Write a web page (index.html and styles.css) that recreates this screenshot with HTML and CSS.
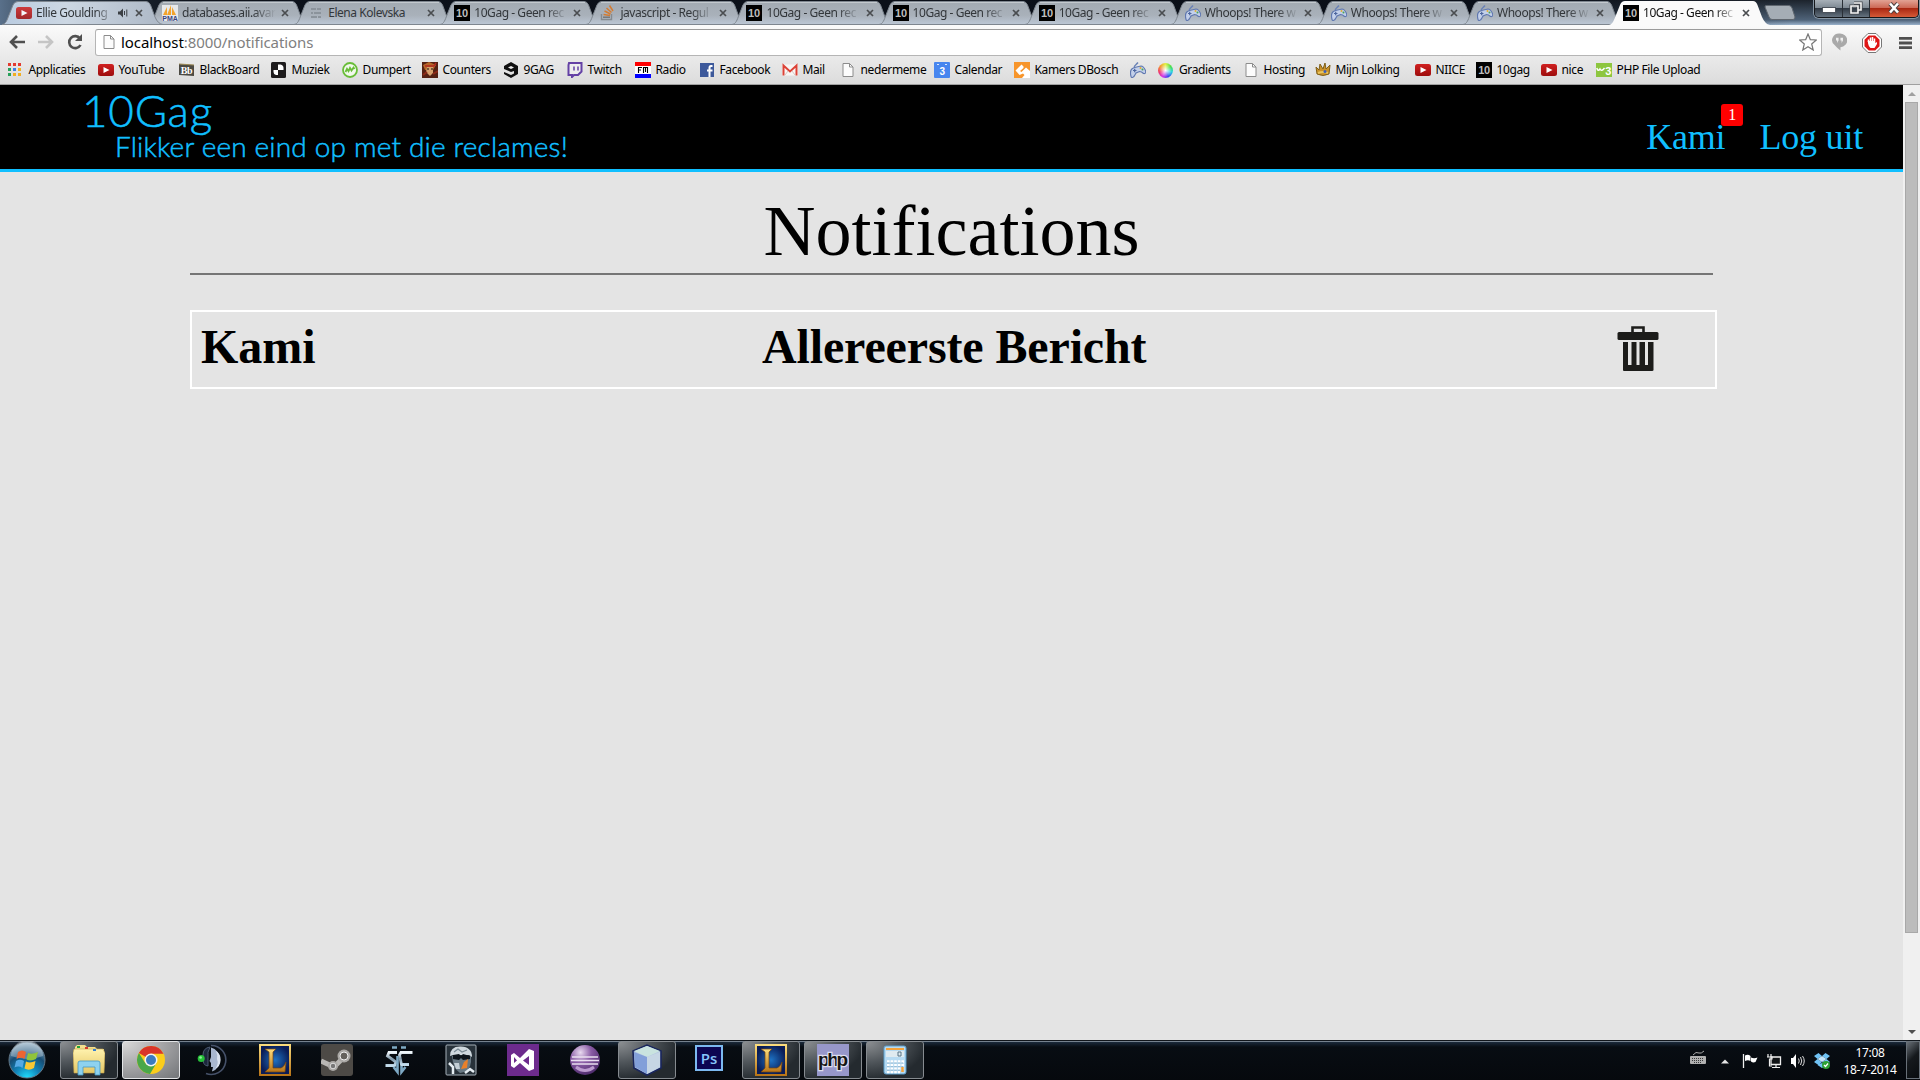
FILE: index.html
```
<!DOCTYPE html>
<html lang="nl">
<head>
<meta charset="utf-8">
<title>10Gag - Geen reclames</title>
<link rel="stylesheet" href="styles.css">
</head>
<body>
<svg class="defs" width="0" height="0">
  <defs>
    <linearGradient id="tabFill" x1="0" y1="0" x2="0" y2="1"><stop offset="0" stop-color="#a2aab2"/><stop offset=".6" stop-color="#a9b1ba"/><stop offset="1" stop-color="#bcc7d5"/></linearGradient>
    <linearGradient id="tabFirst" x1="0" y1="0" x2="1" y2="0"><stop offset="0" stop-color="#b9cbe0"/><stop offset=".4" stop-color="#ccd7e3"/><stop offset="1" stop-color="#adb8c6"/></linearGradient>
    <linearGradient id="red" x1="0" y1="0" x2="0" y2="1"><stop offset="0" stop-color="#d02020"/><stop offset="1" stop-color="#9d0d0d"/></linearGradient>
    <radialGradient id="orb" cx=".5" cy="1" r="1"><stop offset="0" stop-color="#1fe0ff"/><stop offset=".35" stop-color="#1283b8"/><stop offset=".65" stop-color="#174d74"/><stop offset="1" stop-color="#9fb9cb"/></radialGradient>
    <linearGradient id="gold" x1="0" y1="0" x2="0" y2="1"><stop offset="0" stop-color="#fbdc7c"/><stop offset="1" stop-color="#b87518"/></linearGradient>
    <radialGradient id="lolBlue"><stop offset="0" stop-color="#1d72c4"/><stop offset="1" stop-color="#0a1c56"/></radialGradient>
    <linearGradient id="silver" x1="0" y1="0" x2="0" y2="1"><stop offset="0" stop-color="#eef5fa"/><stop offset=".5" stop-color="#8198aa"/><stop offset="1" stop-color="#c3dcec"/></linearGradient>
    <linearGradient id="folder" x1="0" y1="0" x2="0" y2="1"><stop offset="0" stop-color="#fff2ae"/><stop offset="1" stop-color="#e5c765"/></linearGradient>
    <radialGradient id="eclipse" cx=".35" cy=".25" r=".9"><stop offset="0" stop-color="#e9daf0"/><stop offset=".4" stop-color="#8a5ca5"/><stop offset="1" stop-color="#3d1d5c"/></radialGradient>

    <symbol id="tab" viewBox="0 0 162 25"><path d="M0 24.5C4 24 5 20 7 15L11 5Q12.500 1.500 16 1.500H144Q147 1.500 148.500 5L153 17Q156 24 161 24.500Z" fill="url(#tabFill)" stroke="#7e868f"/><path d="M15 2.500H145" stroke="#c3c9ce"/></symbol>
    <symbol id="tab-first" viewBox="0 0 162 25"><path d="M0 24.5C4 24 5 20 7 15L11 5Q12.500 1.500 16 1.500H144Q147 1.500 148.500 5L153 17Q156 24 161 24.500Z" fill="url(#tabFirst)" stroke="#7e868f"/></symbol>
    <symbol id="tab-active" viewBox="0 0 162 25"><path d="M0 25C4 24 5 20 7 15L11 5Q12.500 1 16 1H144Q147 1 148.500 5L153 17Q156 24 161 25Z" fill="#fafafa"/></symbol>
    <symbol id="x" viewBox="0 0 8 8"><path d="M1 1L7 7M7 1L1 7" stroke="#4a4d50" stroke-width="1.700"/></symbol>
    <symbol id="yt" viewBox="0 0 16 16"><rect y="2" width="16" height="12" rx="2.500" fill="url(#red)"/><path d="M5.500 5V11L11.500 8Z" fill="#fff"/></symbol>
    <symbol id="ten" viewBox="0 0 16 16"><rect width="16" height="16" fill="#000"/><text x="8" y="12.300" text-anchor="middle" font-family="Liberation Sans" font-size="11" font-weight="700" fill="#bdbdbd">10</text></symbol>
    <symbol id="pma" viewBox="0 0 16 16"><rect width="16" height="16" fill="#e6e8ea"/><path d="M1 10L5 2V10ZM5 10L9 0V10ZM10 10V2L14 10Z" fill="#f3a32c"/><text x="8" y="16" text-anchor="middle" font-family="Liberation Sans" font-size="7" font-weight="700" fill="#3c4580">PMA</text></symbol>
    <symbol id="bars" viewBox="0 0 16 16"><path d="M3 4H8M9 4H13M3 8H5M6 8H13M3 12H9M10 12H13" stroke="#8b939b" stroke-width="1.800"/></symbol>
    <symbol id="stack" viewBox="0 0 16 16"><path d="M1.500 9V14.500H11.500V9" fill="none" stroke="#858b90" stroke-width="1.400"/><path d="M3 12.200H10" stroke="#777" stroke-width="1.500"/><path d="M3.500 9.500L10 10.500M4.500 6L10.500 9M6.500 3L11.500 7.500M9.500 .5L13 6" stroke="#d37b31" stroke-width="1.500"/></symbol>
    <symbol id="pad" viewBox="0 0 16 16"><path d="M5 6C3 4 6 3 8 .5" fill="none" stroke="#6a82b6" stroke-width="1.400"/><path d="M.8 13.500C0 10 1 6.500 4.500 5.500L11 4Q13.500 4 15.500 8.500Q16.500 12 13.500 11.500Q11.500 9.500 9.500 9.500L6 11Q4 15.500 2 15.500Q1 15.500 .8 13.500Z" fill="#c3d0ea" stroke="#6078b0" stroke-width="1.200"/><path d="M3 8.500H6.500M4.700 6.800V10.200" stroke="#4c659e" stroke-width="1.200"/><circle cx="10.500" cy="6" r="1" fill="#e0ad32"/><circle cx="12.500" cy="7.500" r="1" fill="#4ba455"/></symbol>
    <symbol id="page" viewBox="0 0 16 16"><path d="M3 1.500H9.500L13 5V14.500H3Z" fill="#fcfcfc" stroke="#8c8c8c"/><path d="M9.500 1.500V5H13" fill="none" stroke="#8c8c8c"/></symbol>
    <symbol id="apps" viewBox="0 0 16 16"><path d="M0 1h3v3H0zM5 1h3v3H5zM10 1h3v3h-3z" fill="#e33b30"/><path d="M0 6h3v3H0z" fill="#27a15a"/><path d="M5 6h3v3H5z" fill="#3d7fe6"/><path d="M10 6h3v3h-3zM5 11h3v3H5zM10 11h3v3h-3z" fill="#f1ae22"/><path d="M0 11h3v3H0z" fill="#27a15a"/></symbol>
    <symbol id="bb" viewBox="0 0 16 16"><path d="M0 2L15 3V14L0 13Z" fill="#4c4a43"/><path d="M0 2L15 3" stroke="#9b8753"/><text x="7.500" y="12" text-anchor="middle" font-family="Liberation Serif" font-size="10" font-weight="700" fill="#fff">Bb</text></symbol>
    <symbol id="muziek" viewBox="0 0 16 16"><rect width="15" height="16" rx="1.500" fill="#1d1b1c"/><path d="M7 2.500H9.500Q12.500 3 12.500 6V8H7Z" fill="#fff"/><path d="M2.500 8H7V13H5Q2.500 12.500 2.500 10Z" fill="#fff"/></symbol>
    <symbol id="dumpert" viewBox="0 0 16 16"><circle cx="8" cy="8" r="7" fill="#f2f8ed" stroke="#68bd38" stroke-width="1.800"/><path d="M3.500 10L5 6.800L6.500 9.200L8 6L9.500 8.500L11.500 5.500L12.500 7" fill="none" stroke="#68bd38" stroke-width="1.800"/></symbol>
    <symbol id="counters" viewBox="0 0 16 16"><rect width="16" height="16" fill="#552113"/><path d="M1 3L7 0L14 3L11 8H3Z" fill="#b66728"/><path d="M5 5H11V11L8 14L4 10Z" fill="#d6a06d"/><path d="M3 4L12 4L14 1" stroke="#b2281f" stroke-width="1.500" fill="none"/><path d="M1 13L5 10M11 12L16 9" stroke="#8c2a18" stroke-width="2"/><path d="M5 7H7M9 7H11" stroke="#18100b"/></symbol>
    <symbol id="nine" viewBox="0 0 16 16"><path d="M8 0L15 4V12L8 16L1 12V10L8 13L11 11.500V9L8 10L1 7V4Z" fill="#101010"/><path d="M5 5.500L8 4L11 5.500L8 7Z" fill="#eee"/></symbol>
    <symbol id="twitch" viewBox="0 0 16 16"><path d="M1.500 3V13H5V15L7 13H11L14.500 9.500V1H2Z" fill="#eee" stroke="#6441a5" stroke-width="2"/><path d="M7 4.500V8.500M11 4.500V8.500" stroke="#6441a5" stroke-width="1.500"/></symbol>
    <symbol id="fm" viewBox="0 0 16 16"><rect width="16" height="16" fill="#fff"/><path d="M0 0H16V4H0Z" fill="#f00"/><path d="M0 12H16V16H0Z" fill="#00f"/><path d="M3.500 11V5.500H7M3.500 8H6M8.500 11V5.500H12.500V11M10.500 6V10" fill="none" stroke="#000" stroke-width="1.100"/></symbol>
    <symbol id="fb" viewBox="0 0 16 16"><rect x="1" y="1" width="14" height="14" fill="#3d599b"/><path d="M13.500 4H12Q10.500 4 10.500 6V15M8 8.500H13.500" fill="none" stroke="#fff" stroke-width="2"/></symbol>
    <symbol id="mail" viewBox="0 0 16 16"><rect y="2.500" width="16" height="11" fill="#f8f5f4"/><path d="M1.500 13.500V3.500L8 9.500L14.500 3.500V13.500" fill="none" stroke="#dc4337" stroke-width="2"/><path d="M3 13L6 9M13 13L10 9" stroke="#d8c5c0"/></symbol>
    <symbol id="cal" viewBox="0 0 16 16"><rect width="16" height="16" rx="1" fill="#4786ef"/><path d="M3 2.500H5M11 2.500H13" stroke="#d8e7fc"/><text x="8" y="13" text-anchor="middle" font-family="Liberation Sans" font-size="10" font-weight="700" fill="#fff">3</text></symbol>
    <symbol id="kamers" viewBox="0 0 16 16"><rect width="16" height="16" fill="#f7952b"/><path d="M1.500 8.500L7.500 2.500L9.500 4.500V6L6 9L7.500 10L12 5.500L16 9V16H8L10.500 13L9 11.500L5.500 13Z" fill="#fff"/></symbol>
    <symbol id="lolking" viewBox="0 0 16 16"><path d="M1 5L4 8L5 2L8 7L10 1L11 7L15 3L14 12Q8 15 2 12Z" fill="#c9912a" stroke="#806019"/><path d="M3 11Q8 9 13 11" fill="none" stroke="#eac55d" stroke-width="2"/><circle cx="10" cy="9.500" r="1.500" fill="#3d5fbb"/></symbol>
    <symbol id="w3" viewBox="0 0 16 16"><rect y="1" width="16" height="14" fill="#8dc63f"/><path d="M.8 6Q2 10 4 7Q5.500 10 8.500 6" fill="none" stroke="#fff" stroke-width="1.500"/><text x="12" y="13" text-anchor="middle" font-family="Liberation Sans" font-size="11" font-weight="700" fill="#fff">3</text></symbol>
    <symbol id="lol" viewBox="0 0 32 32"><rect x="1" y="1" width="30" height="30" fill="url(#lolBlue)" stroke="url(#gold)" stroke-width="2"/><path d="M6 5H17L14 8V24H22Q25 23 27 18L26 28H6L10 24V8Z" fill="url(#gold)" stroke="#76430c" stroke-width=".7"/></symbol>
  </defs>
</svg>

<header class="browser">
  <div class="titlebar">
    <div class="tabs">
      <div class="tab"><svg class="shape"><use href="#tab-first"/></svg><svg class="fav dim"><use href="#yt"/></svg><span class="label short">Ellie Goulding</span><svg class="sound" viewBox="0 0 10 10"><path d="M0 3.500H2L5 .5V9.500L2 6.500H0Z" fill="#3b3f44"/><path d="M6.500 3V7M8.800 1.500V8.500" stroke="#3b3f44"/></svg><svg class="x"><use href="#x"/></svg></div>
      <div class="tab"><svg class="shape"><use href="#tab"/></svg><svg class="fav"><use href="#pma"/></svg><span class="label">databases.aii.avar</span><svg class="x"><use href="#x"/></svg></div>
      <div class="tab"><svg class="shape"><use href="#tab"/></svg><svg class="fav"><use href="#bars"/></svg><span class="label full">Elena Kolevska</span><svg class="x"><use href="#x"/></svg></div>
      <div class="tab"><svg class="shape"><use href="#tab"/></svg><svg class="fav"><use href="#ten"/></svg><span class="label">10Gag - Geen rec</span><svg class="x"><use href="#x"/></svg></div>
      <div class="tab"><svg class="shape"><use href="#tab"/></svg><svg class="fav"><use href="#stack"/></svg><span class="label">javascript - Regul</span><svg class="x"><use href="#x"/></svg></div>
      <div class="tab"><svg class="shape"><use href="#tab"/></svg><svg class="fav"><use href="#ten"/></svg><span class="label">10Gag - Geen rec</span><svg class="x"><use href="#x"/></svg></div>
      <div class="tab"><svg class="shape"><use href="#tab"/></svg><svg class="fav"><use href="#ten"/></svg><span class="label">10Gag - Geen rec</span><svg class="x"><use href="#x"/></svg></div>
      <div class="tab"><svg class="shape"><use href="#tab"/></svg><svg class="fav"><use href="#ten"/></svg><span class="label">10Gag - Geen rec</span><svg class="x"><use href="#x"/></svg></div>
      <div class="tab"><svg class="shape"><use href="#tab"/></svg><svg class="fav"><use href="#pad"/></svg><span class="label">Whoops! There w</span><svg class="x"><use href="#x"/></svg></div>
      <div class="tab"><svg class="shape"><use href="#tab"/></svg><svg class="fav"><use href="#pad"/></svg><span class="label">Whoops! There w</span><svg class="x"><use href="#x"/></svg></div>
      <div class="tab"><svg class="shape"><use href="#tab"/></svg><svg class="fav"><use href="#pad"/></svg><span class="label">Whoops! There w</span><svg class="x"><use href="#x"/></svg></div>
      <div class="tab active"><svg class="shape"><use href="#tab-active"/></svg><svg class="fav"><use href="#ten"/></svg><span class="label">10Gag - Geen rec</span><svg class="x"><use href="#x"/></svg></div>
    </div>
    <svg class="newtab" viewBox="0 0 32 16"><path d="M2 .5H25Q27 .5 28 3L31 12Q31 14.500 29 14.500H8Q6 14.500 5 12L1 2Q1 .5 2 .5Z" fill="#a5adb5" stroke="#60676f"/></svg>
    <div class="winbtns">
      <span class="wb min"><i></i></span>
      <span class="wb max"><svg width="14" height="14" viewBox="0 0 14 14"><path d="M5 2H12V9H9M2 5H9V12H2Z" fill="none" stroke="#42464d" stroke-width="3.200"/><path d="M5 2H12V9H9M2 5H9V12H2Z" fill="none" stroke="#f5f5f5" stroke-width="1.600"/></svg></span>
      <span class="wb close"><svg width="14" height="12" viewBox="0 0 14 12"><path d="M3 1.500L11 10.500M11 1.500L3 10.500" stroke="#4d4242" stroke-width="4.500"/><path d="M3 1.500L11 10.500M11 1.500L3 10.500" stroke="#fff" stroke-width="2.600"/></svg></span>
    </div>
  </div>
  <div class="toolbar">
    <svg class="nav-ico" viewBox="0 0 18 16"><path d="M17 8H3M9 2L3 8L9 14" fill="none" stroke="#505050" stroke-width="2.600"/></svg>
    <svg class="nav-ico" viewBox="0 0 18 16"><path d="M1 8H15M9 2L15 8L9 14" fill="none" stroke="#c5c5c5" stroke-width="2.600"/></svg>
    <svg class="nav-ico" viewBox="0 0 18 16"><path d="M14 4.500A6 6 0 1 0 14.500 11" fill="none" stroke="#505050" stroke-width="2.600"/><path d="M16 0V7H9Z" fill="#505050"/></svg>
    <div class="omnibox">
      <svg class="docico"><use href="#page"/></svg>
      <span class="url">localhost<span class="grey">:8000/notifications</span></span>
      <svg class="star" viewBox="0 0 18 18"><path d="M9 1L11.300 6.600L17.300 7L12.700 11L14.200 17L9 13.700L3.800 17L5.300 11L.7 7L6.700 6.600Z" fill="#fff" stroke="#777" stroke-width="1.200"/></svg>
    </div>
    <svg class="ext hang" viewBox="0 0 16 19"><path d="M8 .5A7.500 7 0 0 1 9 15V18.500Q4 14.500 3 13A7.500 7 0 0 1 8 .5Z" fill="#a9a9a9"/><path d="M4.300 5H7V8L5.500 10.500V8H4.300ZM9 5H11.700V8L10.200 10.500V8H9Z" fill="#f0f0f0"/></svg>
    <svg class="ext abp" viewBox="0 0 20 20"><path d="M6 .5H14L19.500 6V14L14 19.500H6L.5 14V6Z" fill="#fff" stroke="#777"/><path d="M6.800 2.500H13.200L17.500 6.800V13.200L13.200 17.500H6.800L2.500 13.200V6.800Z" fill="#df1616"/><path d="M6.500 9V6.500M8.500 8V4.500M10.500 8V4M12.500 8V5.500" stroke="#fff" stroke-width="1.500"/><path d="M5.800 8H13.300V10L15 9V11L12.500 15H8.500Q6 13 5.800 8Z" fill="#fff"/></svg>
    <svg class="ext menu" viewBox="0 0 14 14"><path d="M0 2H14M0 7H14M0 12H14" stroke="#505050" stroke-width="3"/></svg>
  </div>
  <nav class="bookmarks">
    <a><svg><use href="#apps"/></svg>Applicaties</a>
    <a><svg><use href="#yt"/></svg>YouTube</a>
    <a><svg><use href="#bb"/></svg>BlackBoard</a>
    <a><svg><use href="#muziek"/></svg>Muziek</a>
    <a><svg><use href="#dumpert"/></svg>Dumpert</a>
    <a><svg><use href="#counters"/></svg>Counters</a>
    <a><svg><use href="#nine"/></svg>9GAG</a>
    <a><svg><use href="#twitch"/></svg>Twitch</a>
    <a><svg><use href="#fm"/></svg>Radio</a>
    <a><svg><use href="#fb"/></svg>Facebook</a>
    <a><svg><use href="#mail"/></svg>Mail</a>
    <a><svg><use href="#page"/></svg>nedermeme</a>
    <a><svg><use href="#cal"/></svg>Calendar</a>
    <a><svg><use href="#kamers"/></svg>Kamers DBosch</a>
    <a><svg><use href="#pad"/></svg></a>
    <a><i class="wheel"></i>Gradients</a>
    <a><svg><use href="#page"/></svg>Hosting</a>
    <a><svg><use href="#lolking"/></svg>Mijn Lolking</a>
    <a><svg><use href="#yt"/></svg>NIICE</a>
    <a><svg><use href="#ten"/></svg>10gag</a>
    <a><svg><use href="#yt"/></svg>nice</a>
    <a><svg><use href="#w3"/></svg>PHP File Upload</a>
  </nav>
</header>

<div class="viewport">
  <div class="page">
    <div class="site-header">
      <div class="brand">
        <div class="logo">10Gag</div>
        <div class="slogan">Flikker een eind op met die reclames!</div>
      </div>
      <div class="user">
        <a class="name">Kami<span class="badge">1</span></a>
        <a>Log uit</a>
      </div>
    </div>
    <main class="content">
      <h1>Notifications</h1>
      <div class="message">
        <b class="from">Kami</b>
        <b class="subject">Allereerste Bericht</b>
        <svg class="trash" viewBox="0 0 42 45"><path d="M15.500 6V1.500H26.500V6" fill="none" stroke="#1c1c1a" stroke-width="2.600"/><rect x=".5" y="6" width="41" height="8" rx="1.500" fill="#1c1c1a"/><path d="M6 16H11V39H14.500V16H19.500V39H22.500V16H28V39H31V16H36.500V44Q36.500 45 35 45H7Q6 45 6 44Z" fill="#1c1c1a"/></svg>
      </div>
    </main>
  </div>
  <div class="scrollbar"><i class="up"></i><div class="thumb"></div><i class="down"></i></div>
</div>

<footer class="taskbar">
  <div class="start"><svg width="38" height="38" viewBox="0 0 38 38"><circle cx="19" cy="19" r="18" fill="url(#orb)" stroke="#637787"/><path d="M3 15A16 16 0 0 1 35 15Q20 21 3 15Z" fill="#fff" opacity=".3"/><path d="M10 11Q14 8 18 11L16.500 18Q13 15.500 8.500 18Z" fill="#ed6532"/><path d="M20 12Q24 14 30 11L28 18Q23 20.500 18.500 18.500Z" fill="#90c43b"/><path d="M8 20Q12 17.500 16 20L14.500 27Q11 24.500 6.500 26.500Z" fill="#55a9e5"/><path d="M18 20.500Q22 22.500 27.500 20L26 27Q21 30 16.500 27.500Z" fill="#fac834"/></svg></div>
  <div class="tasks">
    <div class="task open"><svg viewBox="0 0 32 32"><path d="M2 3L4 1H12L14 3H22L24 5H31V9H2Z" fill="#f4df8d"/><path d="M0 9L1 5H30L32 9L31 29H1Z" fill="url(#folder)" stroke="#c3a24c" stroke-width=".6"/><path d="M4 3H7" stroke="#23a23a" stroke-width="2"/><path d="M12 4H15" stroke="#d43b2d" stroke-width="2"/><path d="M20 6H23" stroke="#367fd0" stroke-width="2"/><path d="M5 31V19Q5 17 7 17H25Q27 17 27 19V31H22V23H10V31Z" fill="#8ed2ef" stroke="#4498c4" stroke-width=".8"/></svg></div>
    <div class="task open current"><svg viewBox="0 0 32 32"><circle cx="16" cy="16" r="14" fill="#fbcd1b"/><path d="M16 16L3.900 9A14 14 0 0 1 28.500 9.700H16Z" fill="#d9352a"/><path d="M3.900 9L10.500 19.500L21.500 19L15 30A14 14 0 0 1 3.900 9Z" fill="#4aa749"/><circle cx="16" cy="16" r="6.500" fill="#f4f4f4"/><circle cx="16" cy="16" r="5" fill="#3c7bc0"/></svg></div>
    <div class="task"><svg viewBox="0 0 32 32"><path d="M14 1.500A14.500 14.500 0 1 1 9 29.500" fill="none" stroke="#46526a" stroke-width="1.600"/><path d="M14 3.500A12 12.500 0 0 1 15 27.500L16 23H14V19L12.500 17L14 13Z" fill="#a9b7cf"/><path d="M19 7A9 10 0 0 1 18 25Q22 20 20 15Q21 11 19 7Z" fill="#dbe2ee"/><path d="M6 11Q6 4 13 3Q10 8 11 14V22Q5 22 6 11Z" fill="#1c273c" stroke="#4b5971"/><circle cx="4.200" cy="14.500" r="3.500" fill="#25bf37"/><circle cx="3.600" cy="13.500" r="1.300" fill="#8ff09a"/></svg></div>
    <div class="task"><svg><use href="#lol"/></svg></div>
    <div class="task"><svg viewBox="0 0 32 32"><rect width="32" height="32" rx="3" fill="#4d4a46"/><path d="M0 17L13 23L22 14" stroke="#b9b7b4" stroke-width="5" fill="none"/><circle cx="23" cy="12" r="6.500" fill="#aaa8a5"/><circle cx="23" cy="12" r="4" fill="#65625d" stroke="#eee"/><circle cx="12" cy="22" r="5" fill="#aaa8a5"/><circle cx="12" cy="22" r="2.800" fill="#777" stroke="#ddd"/></svg></div>
    <div class="task"><svg viewBox="0 0 32 32"><path d="M14 8.500H6L4.500 12L13 18L11.500 21.500H2.500" fill="none" stroke="url(#silver)" stroke-width="2.800"/><path d="M29.500 8.500H18L16.500 11L18.500 20.500H26" fill="none" stroke="url(#silver)" stroke-width="2.800"/><path d="M9 3.500H14M18 3.500H23M14.500 12V28L10.500 23M18.500 22V28L22.500 23" stroke="#7ea9c4" stroke-width="2.600" fill="none"/></svg></div>
    <div class="task"><svg viewBox="0 0 32 32"><rect x="1" y="1" width="30" height="30" rx="1" fill="#28323a" stroke="#a5b0b8"/><path d="M5 12Q5 2 16 2.500Q27 3 27 13L24 11H8Z" fill="#cfd8de"/><path d="M7 12H26V18Q25 28 15 29Q8 25 7 12Z" fill="#687883"/><path d="M8 11L14 10L16 12L18 10L25 12V15L18 16L16 14L14 16L8 15Z" fill="#0d141b"/><path d="M9 19H14L15 25H11Z" fill="#c3ced5"/><path d="M16 25L19 18L23 15L22 24Z" fill="#e8802a"/><path d="M4 19L8 23V30M20 29L25 25L29 28" stroke="#e5edf2" stroke-width="2.500" fill="none"/><path d="M9 8L13 5L17 8L22 6" stroke="#7a8a94" stroke-width="1.200" fill="none"/></svg></div>
    <div class="task"><svg viewBox="0 0 32 32"><rect width="32" height="32" fill="#6d2b8d"/><path d="M4 11L7 9L13 14L22 5L27 7V25L22 27L13 19L7 24L4 22ZM7 13V19L10 16.500ZM22 12L16 16.500L22 21Z" fill="#fff" fill-rule="evenodd"/></svg></div>
    <div class="task"><svg viewBox="0 0 32 32"><circle cx="16" cy="16" r="15" fill="url(#eclipse)"/><path d="M3 13H29M2 16.500H30M3 20H29" stroke="#eadff0" stroke-width="1.600"/><path d="M7 23Q16 30 25 23" stroke="#bc9bcf" stroke-width="3" fill="none"/></svg></div>
    <div class="task open"><svg viewBox="0 0 32 32"><path d="M2 7L16 1L30 7V24L16 31L3 24Z" fill="#b5c8e2" stroke="#19265d" stroke-width="1.600"/><path d="M3 7L16 2L29 7L16 13Z" fill="#c9e3df"/><path d="M3 8L16 13V30L4 23Z" fill="#829fd9"/><path d="M16 13L29 8V23L16 30Z" fill="#c6d6e4"/></svg></div>
    <div class="task ps"><svg viewBox="0 0 28 26"><rect x="1" y="1" width="26" height="24" fill="#0c0652" stroke="#7cb9f0" stroke-width="2"/><text x="14" y="18.500" text-anchor="middle" font-family="Open Sans" font-size="15" font-weight="600" fill="#86c5fb">Ps</text></svg></div>
    <div class="task open"><svg><use href="#lol"/></svg></div>
    <div class="task open"><svg viewBox="0 0 32 32"><rect width="32" height="32" fill="#9797ca"/><text x="16" y="22" text-anchor="middle" textLength="30" font-family="Liberation Sans" font-size="19" font-weight="700" fill="#151515" stroke="#dedeee" stroke-width="2.500" paint-order="stroke">php</text></svg></div>
    <div class="task open"><svg viewBox="0 0 32 32"><rect x="5" y="2" width="22" height="28" rx="2" fill="#b6daf2" stroke="#5a9cc8"/><path d="M7 4H25V6H7Z" fill="#f2a23c"/><path d="M7 7H25V13H7Z" fill="#dfeaf0"/><path d="M19 8H22V12H19Z" fill="none" stroke="#597486"/><path d="M8 17.500H25M8 21H25M8 24.500H25M8 28H21" stroke="#fff" stroke-width="2.400" stroke-dasharray="2.600 1"/><path d="M8 19H24M8 22.700H24M8 26.200H21" stroke="#7fa9c5" stroke-width=".8" stroke-dasharray="2.600 1"/><path d="M23.500 23V28" stroke="#f2a23c" stroke-width="2.500"/></svg></div>
  </div>
  <div class="tray">
    <svg width="16" height="16" viewBox="0 0 16 16"><path d="M3 5Q6 1 9 3Q11 4 14 1" fill="none" stroke="#aaa"/><rect y="6" width="16" height="8" rx="1" fill="#b0b0b0"/><path d="M2 8.500H14M2 10.500H14M4 12.500H12" stroke="#38393a" stroke-dasharray="1 1"/></svg>
    <svg width="8" height="16" viewBox="0 0 8 16"><path d="M0 10.500L4 6.500L8 10.500Z" fill="#e5e5e5"/></svg>
    <svg width="16" height="16" viewBox="0 0 16 16"><path d="M1.500 1V15" stroke="#eee" stroke-width="1.300"/><path d="M3 2.500Q6 1 8.500 3V8Q6 6.500 3 8Z" fill="#fff"/><path d="M9 4.500Q12 6 15.500 4.500L13.500 9Q11 10 9 8.500Z" fill="#fff"/></svg>
    <svg width="16" height="16" viewBox="0 0 16 16"><path d="M5 4H14.500V11.500H5Z" fill="#101316" stroke="#eee" stroke-width="1.300"/><path d="M10 12V14M6 14.500H14M2 1V4M5 1V4M1 4H6V6H3.500V13H6" fill="none" stroke="#eee" stroke-width="1.200"/></svg>
    <svg width="16" height="16" viewBox="0 0 16 16"><path d="M1 5H3L6 1V15L3 11H1Z" fill="#fff"/><path d="M8.500 5.500Q10 8 8.500 10.500M10.500 4Q13 8 10.500 12M12.500 3Q16 8 12.500 13" fill="none" stroke="#ddd"/></svg>
    <svg width="16" height="16" viewBox="0 0 16 16"><path d="M4.500 0L8 3L3.500 6L0 3ZM11.500 0L16 3L12.500 6L8 3ZM0 9L3.500 6L8 9L4.500 12ZM8 9L12.500 6L16 9L11.500 12ZM3.500 12L8 10L12 12L8 15Z" fill="#6fc2f4"/><path d="M3.500 6L8 3L12.500 6L8 9Z" fill="#c4e6fb"/><circle cx="12" cy="12" r="4" fill="#2da234"/><path d="M10 12L11.500 13.500L14 10.500" fill="none" stroke="#fff" stroke-width="1.200"/></svg>
  </div>
  <div class="clock"><span>17:08</span><span>18-7-2014</span></div>
  <div class="desktop"></div>
</footer>
</body>
</html>
```
FILE: styles.css
```
* { box-sizing: border-box; }
html, body { margin: 0; height: 100%; overflow: hidden; }
body {
  width: 1920px; height: 1080px;
  display: flex; flex-direction: column;
  background: #e4e4e4; color: #000;
  font-family: "Liberation Serif", "Times New Roman", serif;
}
.defs { position: absolute; }

.browser { height: 85px; font-family: "Noto Sans", "Open Sans", sans-serif; font-size: 12px; background: linear-gradient(#fafafa 25px, #dcdcdc); border-bottom: 1px solid #a0a0a0; }
.titlebar { height: 25px; display: flex; padding-left: 2px; background: linear-gradient(90deg, #59708a 0, #26323f 60px, #0c111a 200px, #0a0f18 1500px, transparent 1790px), linear-gradient(#1c232c, #4f6379 80%, #9ab2cc); }
.tabs { display: flex; width: 1763px; }
.tab { position: relative; z-index: 1; flex: none; width: 146.100px; height: 25px; padding: 0 5px 0 14px; display: flex; align-items: center; color: #33373b; }
.tab:first-child { z-index: 2; }
.tab.active { z-index: 3; color: #111; }
.shape { position: absolute; left: 0; top: 0; width: 162px; height: 25px; z-index: -1; }
.fav { width: 16px; height: 16px; flex: none; position: relative; }
.dim { opacity: .85; }
.label { margin-left: 4px; width: 94px; height: 18px; line-height: 18px; white-space: nowrap; letter-spacing: -.45px; flex: none; position: relative; -webkit-mask-image: linear-gradient(90deg, #000 76%, transparent); mask-image: linear-gradient(90deg, #000 76%, transparent); }
.label.full { -webkit-mask-image: none; mask-image: none; }
.label.short { width: 78px; }
.sound { width: 10px; height: 10px; margin-left: 4px; position: relative; }
.x { width: 8px; height: 8px; margin-left: auto; flex: none; position: relative; }
.newtab { width: 32px; height: 16px; margin: 5px 0 0 -1px; }
.winbtns { display: flex; margin-left: auto; margin-right: 1px; width: 105px; height: 18px; border: 1px solid #15181c; border-top: 0; border-radius: 0 0 5px 5px; box-shadow: 0 0 0 1px #8796a4; overflow: hidden; }
.wb { display: flex; align-items: center; justify-content: center; width: 28px; background: linear-gradient(#a7b0b8, #7f8a94 45%, #303944 50%, #65727f); border-right: 1px solid #2a3037; }
.wb.min i { width: 12px; height: 4px; background: #fff; margin-top: 3px; box-shadow: 0 0 0 1px #4c535c; }
.wb.max { width: 27px; padding-bottom: 2px; }
.wb.close { flex: 1; border: 0; padding-bottom: 2px; background: linear-gradient(#e2a294, #cd6956 45%, #aa2812 50%, #d65a38); }

.toolbar { height: 33px; display: flex; align-items: flex-start; padding: 4px 8px 0 8px; }
.nav-ico { width: 18px; height: 16px; margin: 5px 11px 0 0; }
.omnibox { width: 1727px; height: 27px; border: 1px solid #b5b5b5; border-top-color: #9b9b9b; border-radius: 3px; background: #fff; display: flex; align-items: center; padding: 0 4px 1px 5px; }
.docico { width: 16px; height: 16px; }
.url { margin-left: 4px; font-size: 15px; letter-spacing: -.07px; line-height: 22px; margin-top: -1px; }
.grey { color: #808080; }
.star { width: 18px; height: 18px; margin-left: auto; }
.hang { width: 15px; height: 18px; margin: 4px 0 0 10px; }
.abp { width: 20px; height: 20px; margin: 4px 0 0 15px; }
.menu { width: 13px; height: 14px; margin: 7px 0 0 auto; }

.bookmarks { height: 26px; padding: 0 0 2px 8px; display: grid; align-items: center; grid-template-columns: 90px 81px 92px 71px 80px 81px 64px 68px 64px 83px 58px 94px 80px 116px 28px 85px 72px 100px 61px 65px 55px 150px; }
.bookmarks a { display: flex; align-items: center; white-space: nowrap; letter-spacing: -.38px; line-height: 16px; }
.bookmarks svg { width: 16px; height: 16px; margin-right: 4.500px; flex: none; }
.wheel { width: 15px; height: 15px; margin-right: 6px; border-radius: 50%; background: radial-gradient(#fff, transparent 60%), conic-gradient(#e0f040, #4de045, #28d4e0, #3d46f0, #d836e8, #f03868, #f49a30, #e0f040); }

.viewport { height: 955px; display: flex; }
.page { width: 1903px; }
.site-header { height: 87px; background: #000; border-bottom: 3px solid #10bfff; color: #10bfff; display: flex; justify-content: space-between; }
.brand { font-family: Lato, sans-serif; font-weight: 300; white-space: nowrap; padding-left: 82px; -webkit-text-stroke: .5px #10bfff; }
.logo { font-size: 44px; line-height: 50px; height: 44px; letter-spacing: .8px; }
.slogan { font-size: 28px; line-height: 34px; padding-left: 33px; letter-spacing: .18px; }
.user { display: flex; gap: 34px; padding: 31px 40px 0 0; font-size: 36px; line-height: 42px; letter-spacing: -.2px; }
.name { position: relative; }
.badge { position: absolute; left: 75px; top: -12px; width: 22px; height: 22px; background: #f00; color: #fff; border-radius: 3px; font-size: 16px; line-height: 22px; text-align: center; }
.content { width: 1523px; margin: 0 auto; }
h1 { margin: 0 0 35px; padding-top: 18px; height: 103px; border-bottom: 2px solid #757575; font-size: 72px; line-height: 82px; font-weight: 400; text-align: center; }
.message { width: 1527px; height: 79px; border: 2px solid #fff; display: grid; grid-template-columns: 561px 864px 1fr; padding-left: 9px; font-size: 48px; line-height: 54px; }
.message b { padding-top: 8px; }
.subject { letter-spacing: -.13px; }
.trash { width: 42px; height: 45px; margin: 14px 0 0 -9px; }
.scrollbar { width: 17px; background: #f0f0f0; display: flex; flex-direction: column; align-items: center; padding: 7px 0 6px; }
.thumb { width: 13px; height: 831px; background: #bcbcbc; border: 1px solid #a8a8a8; margin-top: 6px; }
.up, .down { border: 4px solid transparent; height: 0; }
.up { border-top: 0; border-bottom-color: #a0a0a0; }
.down { border-bottom: 0; border-top-color: #505050; margin-top: auto; }

.taskbar { height: 40px; display: flex; background: linear-gradient(#11161c 0 1px, #75818e 1px 2px, #1b2a3b 2px, #080d13 7px, #06090d); font-family: "Noto Sans", "Open Sans", sans-serif; }
.start { width: 58px; padding: 1px 0 0 8px; }
.tasks { display: flex; }
.task { width: 58px; height: 38px; margin: 1px 2px; display: flex; align-items: center; justify-content: center; }
.task svg { width: 32px; height: 32px; }
.task.ps svg { width: 28px; height: 26px; margin-bottom: 4px; }
.task.open { border: 1px solid #868b90; border-radius: 3px; background: radial-gradient(ellipse at 0 0, #8d9093, #50565b 40%, transparent 75%), #242a2f; }
.task.current { border-color: #e2e4e6; background: radial-gradient(ellipse at 0 0, #dadada, #a5a5a7 50%, #727578); }
.tray { margin-left: auto; display: flex; align-items: center; gap: 8px; }
.tray svg { margin-top: 1px; }
.tray svg:first-child { margin: -5px 7px 0 0; }
.tray svg:nth-child(2) { margin-right: 5px; }
.clock { width: 70px; margin: 2px 1px 0 5px; display: flex; flex-direction: column; align-items: center; color: #fff; font-size: 12px; line-height: 17px; letter-spacing: -.3px; padding-top: 2px; }
.desktop { width: 14px; height: 38px; margin-top: 1px; border: 1px solid #687078; background: linear-gradient(135deg, #697077, #15191d 45%, #090c0f); }
```
